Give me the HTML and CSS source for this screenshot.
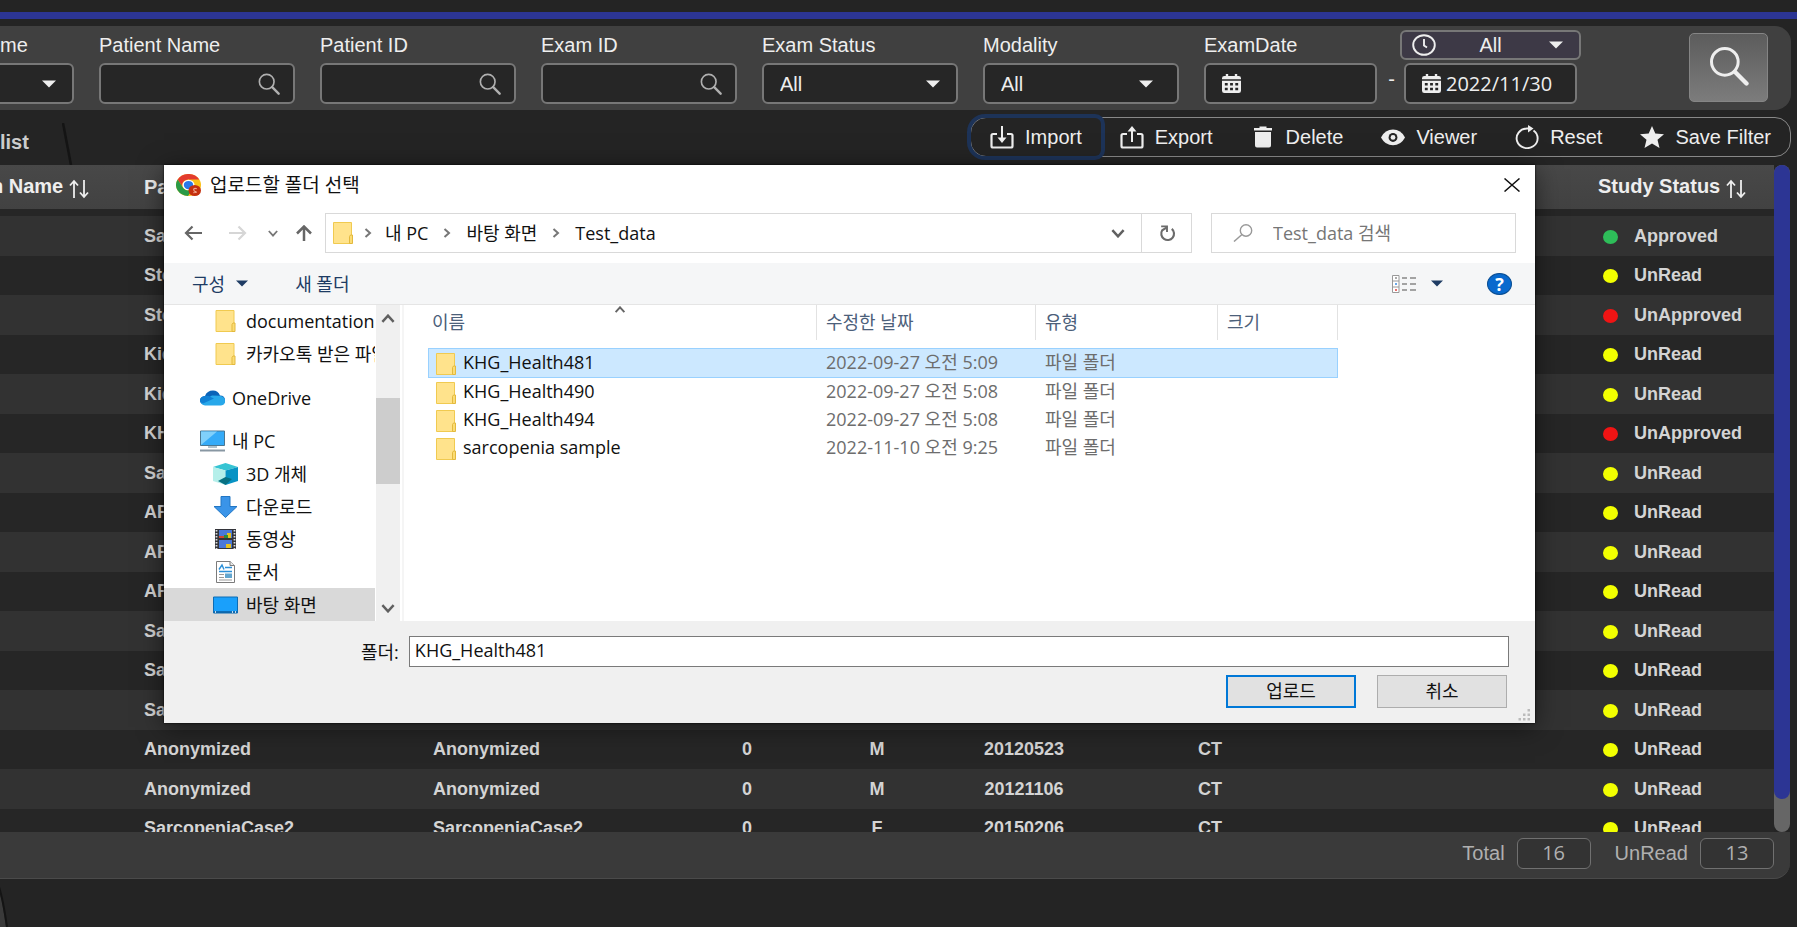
FILE: index.html
```html
<!DOCTYPE html>
<html lang="ko">
<head>
<meta charset="utf-8">
<meta name="viewport" content="width=device-width, initial-scale=1">
<title>Worklist</title>
<link rel="stylesheet" href="styles.css">
</head>
<body>
<svg class="sprite" aria-hidden="true">
  <symbol id="i-search" viewBox="0 0 24 24"><circle cx="9.5" cy="9.5" r="8" fill="none" stroke="currentColor" stroke-width="1.8"/><path d="M15.5 15.5 22.5 22.5" stroke="currentColor" stroke-width="2.6" stroke-linecap="round"/></symbol>
  <symbol id="i-drop" viewBox="0 0 14 8"><path d="M0 0.5H14L7 7.5Z" fill="currentColor"/></symbol>
  <symbol id="i-calendar" viewBox="0 0 20 20"><path d="M2.5 2H4V0H6.500V2H13.500V0H16V2H17.500Q20 2 20 4.500V5.500H0V4.500Q0 2 2.500 2ZM0 7H20V17.500Q20 20 17.500 20H2.500Q0 20 0 17.500Z" fill="currentColor"/><path d="M3 9.500h3v2.500H3zM8.500 9.500h3v2.500h-3zM14 9.500h3v2.500h-3zM3 14.500h3v2.500H3zM8.500 14.500h3v2.500h-3zM14 14.500h3v2.500h-3z" fill="#262626"/></symbol>
  <symbol id="i-clock" viewBox="0 0 24 22"><ellipse cx="12" cy="11" rx="10.800" ry="9.800" fill="none" stroke="currentColor" stroke-width="1.900"/><path d="M12 5V11.500L15 13.500" fill="none" stroke="currentColor" stroke-width="1.900"/></symbol>
  <symbol id="i-import" viewBox="0 0 24 24"><path d="M7 9H3Q1.500 9 1.500 10.500V21Q1.500 22.500 3 22.500H21Q22.500 22.500 22.500 21V10.500Q22.500 9 21 9H17" fill="none" stroke="currentColor" stroke-width="2.200"/><path d="M12 1V14" stroke="currentColor" stroke-width="2"/><path d="M7.500 12.500H16.500L12 18Z" fill="currentColor"/></symbol>
  <symbol id="i-export" viewBox="0 0 24 24"><path d="M7 9H3Q1.500 9 1.500 10.500V21Q1.500 22.500 3 22.500H21Q22.500 22.500 22.500 21V10.500Q22.500 9 21 9H17" fill="none" stroke="currentColor" stroke-width="2.200"/><path d="M12 5V17" stroke="currentColor" stroke-width="2"/><path d="M7.500 6.500H16.500L12 1Z" fill="currentColor"/></symbol>
  <symbol id="i-trash" viewBox="0 0 24 24"><path d="M3 3H8.500V1.500H15.500V3H21V5.500H3ZM4 7H20V20.500Q20 22.500 18 22.500H6Q4 22.500 4 20.500Z" fill="currentColor"/></symbol>
  <symbol id="i-eye" viewBox="0 0 26 24"><path d="M0 12.500Q4.500 4 13 4T26 12.500Q21.500 21 13 21T0 12.500Z" fill="currentColor"/><circle cx="13" cy="12.500" r="4.800" fill="#242424"/><circle cx="13" cy="12.500" r="2.600" fill="currentColor"/></symbol>
  <symbol id="i-reset" viewBox="0 0 24 24"><path d="M18.500 5.500A10.500 9.800 0 1 1 12 3.500H14" fill="none" stroke="currentColor" stroke-width="1.900"/><path d="M13 0 18.500 3.500 13 7.500Z" fill="currentColor"/></symbol>
  <symbol id="i-star" viewBox="0 0 24 24"><path d="M12 1 15.300 8.500 24 9.200 17.500 14.700 19.500 23 12 18.500 4.500 23 6.500 14.700 0 9.200 8.700 8.500Z" fill="currentColor"/></symbol>
  <symbol id="i-sort" viewBox="0 0 20 20"><path d="M5 19V3M1 6.500 5 2 9 6.500M15 1V17M11 13.500 15 18 19 13.500" fill="none" stroke="currentColor" stroke-width="1.800"/></symbol>
  <symbol id="i-folder" viewBox="0 0 20 22"><path d="M.5.5H18.500V21.500H.5Z" fill="#ffe38c" stroke="#f0ca50"/><path d="M16.500 21.500V14.500L17.500 13H19.500V21.500Z" fill="#fbdc74" stroke="#e3b93e"/></symbol>
  <symbol id="i-crumb" viewBox="0 0 8 10"><path d="M1.500 1 6 5 1.500 9" fill="none" stroke="#777" stroke-width="2"/></symbol>
  <symbol id="i-chev" viewBox="0 0 12 8"><path d="M1 1 6 6.500 11 1" fill="none" stroke="currentColor" stroke-width="2.200"/></symbol>
</svg>

<div class="topline"></div>

<form class="filters">
  <div class="field field-cut">
    <label for="f0">me</label>
    <div class="control"><select id="f0" class="box"><option></option></select><svg class="drop"><use href="#i-drop"/></svg></div>
  </div>
  <div class="field">
    <label for="f1">Patient Name</label>
    <div class="control"><input id="f1" class="box" type="text"><svg class="lens"><use href="#i-search"/></svg></div>
  </div>
  <div class="field">
    <label for="f2">Patient ID</label>
    <div class="control"><input id="f2" class="box" type="text"><svg class="lens"><use href="#i-search"/></svg></div>
  </div>
  <div class="field">
    <label for="f3">Exam ID</label>
    <div class="control"><input id="f3" class="box" type="text"><svg class="lens"><use href="#i-search"/></svg></div>
  </div>
  <div class="field">
    <label for="f4">Exam Status</label>
    <div class="control"><select id="f4" class="box"><option>All</option></select><svg class="drop"><use href="#i-drop"/></svg></div>
  </div>
  <div class="field">
    <label for="f5">Modality</label>
    <div class="control"><select id="f5" class="box"><option>All</option></select><svg class="drop drop-in"><use href="#i-drop"/></svg></div>
  </div>
  <div class="dates">
    <div class="field from">
      <label for="f6">ExamDate</label>
      <div class="control"><input id="f6" class="box date" type="text"><svg class="cal"><use href="#i-calendar"/></svg></div>
    </div>
    <span class="dash">-</span>
    <div class="to">
      <div class="control range">
        <select class="box" aria-label="Date range"><option>All</option></select>
        <svg class="clock"><use href="#i-clock"/></svg><svg class="drop"><use href="#i-drop"/></svg>
      </div>
      <div class="control until"><input class="box date" type="text" value="2022/11/30" aria-label="End date"><svg class="cal"><use href="#i-calendar"/></svg></div>
    </div>
  </div>
  <button class="go" type="button" aria-label="Search"><svg><use href="#i-search"/></svg></button>
</form>

<div class="actions">
  <h1 class="tab">list</h1>
  <svg class="tab-edge" viewBox="0 0 12 42"><path d="M1 0Q3 10 9 42" fill="none" stroke="#141414" stroke-width="2.500"/></svg>
  <div class="toolbar">
    <button type="button" class="focused"><svg><use href="#i-import"/></svg>Import</button>
    <button type="button"><svg><use href="#i-export"/></svg>Export</button>
    <button type="button"><svg><use href="#i-trash"/></svg>Delete</button>
    <button type="button"><svg><use href="#i-eye"/></svg>Viewer</button>
    <button type="button"><svg><use href="#i-reset"/></svg>Reset</button>
    <button type="button"><svg><use href="#i-star"/></svg>Save Filter</button>
  </div>
</div>

<main class="list">
  <div class="rows">
    <table class="studies">
      <colgroup><col class="c1"><col class="c2"><col class="c3"><col class="c4"><col class="c5"><col class="c6"><col class="c7"><col><col class="c9"></colgroup>
      <thead><tr><th class="cut">n Name<svg class="sort"><use href="#i-sort"/></svg></th><th>Patient</th><th></th><th></th><th></th><th></th><th></th><th></th><th>Study Status<svg class="sort"><use href="#i-sort"/></svg></th></tr></thead>
      <tbody>
        <tr><td></td><td>Sar</td><td></td><td></td><td></td><td></td><td></td><td></td><td><i class="dot green"></i>Approved</td></tr>
        <tr><td></td><td>Ste</td><td></td><td></td><td></td><td></td><td></td><td></td><td><i class="dot"></i>UnRead</td></tr>
        <tr><td></td><td>Ste</td><td></td><td></td><td></td><td></td><td></td><td></td><td><i class="dot red"></i>UnApproved</td></tr>
        <tr><td></td><td>Kid</td><td></td><td></td><td></td><td></td><td></td><td></td><td><i class="dot"></i>UnRead</td></tr>
        <tr><td></td><td>Kid</td><td></td><td></td><td></td><td></td><td></td><td></td><td><i class="dot"></i>UnRead</td></tr>
        <tr><td></td><td>KHG</td><td></td><td></td><td></td><td></td><td></td><td></td><td><i class="dot red"></i>UnApproved</td></tr>
        <tr><td></td><td>Sar</td><td></td><td></td><td></td><td></td><td></td><td></td><td><i class="dot"></i>UnRead</td></tr>
        <tr><td></td><td>AP</td><td></td><td></td><td></td><td></td><td></td><td></td><td><i class="dot"></i>UnRead</td></tr>
        <tr><td></td><td>AP</td><td></td><td></td><td></td><td></td><td></td><td></td><td><i class="dot"></i>UnRead</td></tr>
        <tr><td></td><td>AP</td><td></td><td></td><td></td><td></td><td></td><td></td><td><i class="dot"></i>UnRead</td></tr>
        <tr><td></td><td>Sar</td><td></td><td></td><td></td><td></td><td></td><td></td><td><i class="dot"></i>UnRead</td></tr>
        <tr><td></td><td>Sar</td><td></td><td></td><td></td><td></td><td></td><td></td><td><i class="dot"></i>UnRead</td></tr>
        <tr><td></td><td>Sar</td><td></td><td></td><td></td><td></td><td></td><td></td><td><i class="dot"></i>UnRead</td></tr>
        <tr><td></td><td>Anonymized</td><td>Anonymized</td><td>0</td><td>M</td><td>20120523</td><td>CT</td><td></td><td><i class="dot"></i>UnRead</td></tr>
        <tr><td></td><td>Anonymized</td><td>Anonymized</td><td>0</td><td>M</td><td>20121106</td><td>CT</td><td></td><td><i class="dot"></i>UnRead</td></tr>
        <tr><td></td><td>SarcopeniaCase2</td><td>SarcopeniaCase2</td><td>0</td><td>F</td><td>20150206</td><td>CT</td><td></td><td><i class="dot"></i>UnRead</td></tr>
      </tbody>
    </table>
    <div class="track"><div class="thumb"></div></div>
  </div>
  <footer class="totals">
    <span>Total</span><output>16</output><span>UnRead</span><output>13</output>
  </footer>
</main>
<div class="bottom"><svg viewBox="0 0 10 40"><path d="M-2 0Q2 12 6 40H-2Z" fill="#3a3a3a"/><path d="M-1 0Q3 12 7 40" fill="none" stroke="#141414" stroke-width="2"/></svg></div>

<section class="dialog" role="dialog" aria-labelledby="dlg-title">
  <header class="titlebar">
    <svg class="chrome" viewBox="0 0 24 24" preserveAspectRatio="none">
      <circle cx="12" cy="12" r="12" fill="#fbc116"/>
      <path d="M1.600 6A12 12 0 0 1 22.400 6H12A6 6 0 0 0 6.500 14.500Z" fill="#e33b2e"/>
      <path d="M1.600 6A12 12 0 0 0 11.500 24L17 15A6 6 0 0 1 6.800 15Z" fill="#2a9a47"/>
      <circle cx="12" cy="12" r="5.800" fill="#fff"/><circle cx="12" cy="12" r="4.500" fill="#2a78e8"/>
      <circle cx="18" cy="18" r="6" fill="#c5300e"/><path d="M20 16Q17 15 17 17T19 19.500 16.500 20.500" fill="none" stroke="#f0a48c" stroke-width="1.200"/>
    </svg>
    <h2 id="dlg-title">업로드할 폴더 선택</h2>
    <button type="button" class="close" aria-label="닫기"><svg viewBox="0 0 16 14" preserveAspectRatio="none"><path d="M.5.5 15.500 13.500M15.500.5.5 13.500" stroke="#111" stroke-width="1.500"/></svg></button>
  </header>

  <div class="nav">
    <div class="moves">
      <button type="button" aria-label="뒤로"><svg viewBox="0 0 18 16"><path d="M18 8H2M8.500 1.500 2 8 8.500 14.500" fill="none" stroke="#666" stroke-width="2.200"/></svg></button>
      <button type="button" aria-label="앞으로" class="fwd"><svg viewBox="0 0 18 16"><path d="M0 8H16M9.500 1.500 16 8 9.500 14.500" fill="none" stroke="#d6d6d6" stroke-width="2.200"/></svg></button>
      <button type="button" aria-label="최근 위치" class="recent"><svg class="chev-s"><use href="#i-chev"/></svg></button>
      <button type="button" aria-label="위로"><svg viewBox="0 0 18 16"><path d="M9 16V2M2 8.500 9 1.500 16 8.500" fill="none" stroke="#666" stroke-width="2.500"/></svg></button>
    </div>
    <div class="address">
      <svg class="folder"><use href="#i-folder"/></svg>
      <svg class="crumb"><use href="#i-crumb"/></svg><span>내 PC</span>
      <svg class="crumb"><use href="#i-crumb"/></svg><span>바탕 화면</span>
      <svg class="crumb"><use href="#i-crumb"/></svg><span>Test_data</span>
      <button type="button" class="history" aria-label="이전 위치"><svg class="chev"><use href="#i-chev"/></svg></button>
      <button type="button" class="refresh" aria-label="새로 고침"><svg viewBox="0 0 16 16"><path d="M12.500 3.600A6 6 0 1 1 3.500 5L7.500 2.500" fill="none" stroke="#6b6b6b" stroke-width="2"/><path d="M2.500 1.300H8V6.500" fill="none" stroke="#6b6b6b" stroke-width="1.800"/></svg></button>
    </div>
    <div class="find">
      <svg viewBox="0 0 20 18"><circle cx="13" cy="6.500" r="5.700" fill="none" stroke="#999" stroke-width="1.400"/><path d="M9 10.500 1 17.500" stroke="#999" stroke-width="1.500"/></svg>
      <input type="text" placeholder="Test_data 검색" aria-label="Test_data 검색">
    </div>
  </div>

  <div class="commands">
    <button type="button" class="organize">구성<svg class="drop"><use href="#i-drop"/></svg></button>
    <button type="button">새 폴더</button>
    <button type="button" class="view" aria-label="보기"><svg class="details" viewBox="0 0 25 18"><path d="M.5.500H7V17.500H.5ZM.5 6H7M.5 12H7" fill="#fff" stroke="#999"/><path d="M10 3h5M18 3h6M10 9h5M18 9h6M10 15h5M18 15h6" stroke="#888" stroke-width="1.300"/><path d="M3 3h2" stroke="#555"/><path d="M3 9h2" stroke="#3c8de0" stroke-width="1.500"/><path d="M3 15h2" stroke="#e03c3c" stroke-width="1.500"/></svg><svg class="drop"><use href="#i-drop"/></svg></button>
    <button type="button" class="help" aria-label="도움말">?</button>
  </div>

  <div class="panes">
    <ul class="tree">
      <li class="sub"><svg class="folder"><use href="#i-folder"/></svg>documentation</li>
      <li class="sub"><svg class="folder"><use href="#i-folder"/></svg>카카오톡 받은 파일</li>
      <li class="gap"></li>
      <li><svg viewBox="0 0 25 15"><path d="M5 14Q0 14 0 10 0 6 5 5.500 7 0 13 0 18 0 20 5 25 5 25 10 25 14 21 14Z" fill="#0a63b8"/><path d="M5 15Q1 14.500 1 11L12 5 20 5.200Q25 6 25 10.500 25 14.500 21 15Z" fill="#28a8ea"/><path d="M5 5.500 8 5.200 14 8 3 13Q0 12 0 10 0 6 5 5.500Z" fill="#1080d4"/></svg>OneDrive</li>
      <li class="gap"></li>
      <li><svg viewBox="0 0 25 21"><path d="M.5.5H24.500V15H.5Z" fill="#35abf8" stroke="#4b7791"/><path d="M1 14.500V1H17Z" fill="#80d0fb"/><path d="M8 16.500H17" stroke="#9db3c0" stroke-width="1.600"/><path d="M0 20H25" stroke="#8897a3" stroke-width="2"/></svg>내 PC</li>
      <li class="sub"><svg viewBox="0 0 25 22"><path d="M12.500 0 25 4 12.500 7.500 0 4Z" fill="#36c4d3"/><path d="M0 4 12.500 7.500V22L0 18Z" fill="#b5efea"/><path d="M25 4 12.500 7.500V22L25 18Z" fill="#0793c4"/><path d="M12.500 14 19 16 12.500 22 5 18Z" fill="#087183"/></svg>3D 개체</li>
      <li class="sub"><svg viewBox="0 0 25 22"><path d="M8 .5H17V10.500H24L12.500 21.500 1 10.500H8Z" fill="#3a94e8" stroke="#2176c4"/></svg>다운로드</li>
      <li class="sub"><svg viewBox="0 0 25 22"><path d="M2 1H23V21H2Z" fill="#33343a"/><path d="M3.500 2V21M21.500 2V21" stroke="#ddd" stroke-width="1.800" stroke-dasharray="1.500 1.500"/><path d="M6 2H19V10H6ZM6 12H19V20H6Z" fill="#4a78d8"/><path d="M6 8h5v2H6z" fill="#d04630"/><path d="M14 5h4v5h-4zM13 16h5v4h-5z" fill="#e6c11c"/><path d="M11 7h4v3h-4z" fill="#2e8a3a"/></svg>동영상</li>
      <li class="sub"><svg viewBox="0 0 25 22"><path d="M3.500.5H17L21.500 4.500V21.500H3.500Z" fill="#fff" stroke="#7b7b7b"/><path d="M17 .5V4.500H21.500" fill="#e8e8e8" stroke="#7b7b7b"/><path d="M6 8.500 9 4 11 8.500M12 6.500H19M6 10.500H19" fill="none" stroke="#2b8fd8" stroke-width="1.400"/><path d="M6 13.500H11M6 16.500H11M6 19H19" stroke="#999"/><path d="M12 12.500H19V17H12Z" fill="#63a6cf"/></svg>문서</li>
      <li class="sub current"><svg viewBox="0 0 25 17"><path d="M.5.5H24.500V16.500H.5Z" fill="#1aa0fb" stroke="#0d6cb4"/><path d="M1 15.500H24" stroke="#0b5d9e" stroke-width="1.500"/><path d="M2 15.500h1M19 15.500h1M22 15.500h1" stroke="#fff" stroke-width="1.500"/></svg>바탕 화면</li>
    </ul>
    <div class="side-scroll"><svg class="chev flip"><use href="#i-chev"/></svg><div class="side-thumb"></div><svg class="chev"><use href="#i-chev"/></svg></div>
    <div class="files">
      <table>
        <colgroup><col class="f-name"><col class="f-date"><col class="f-type"><col class="f-size"></colgroup>
        <thead><tr><th>이름<svg class="asc"><use href="#i-chev"/></svg></th><th>수정한 날짜</th><th>유형</th><th>크기</th></tr></thead>
        <tbody>
          <tr class="selected"><td><svg class="folder"><use href="#i-folder"/></svg>KHG_Health481</td><td>2022-09-27 오전 5:09</td><td>파일 폴더</td><td></td></tr>
          <tr><td><svg class="folder"><use href="#i-folder"/></svg>KHG_Health490</td><td>2022-09-27 오전 5:08</td><td>파일 폴더</td><td></td></tr>
          <tr><td><svg class="folder"><use href="#i-folder"/></svg>KHG_Health494</td><td>2022-09-27 오전 5:08</td><td>파일 폴더</td><td></td></tr>
          <tr><td><svg class="folder"><use href="#i-folder"/></svg>sarcopenia sample</td><td>2022-11-10 오전 9:25</td><td>파일 폴더</td><td></td></tr>
        </tbody>
      </table>
    </div>
  </div>

  <div class="confirm">
    <div class="name"><label for="folder">폴더:</label><input id="folder" type="text" value="KHG_Health481"></div>
    <div class="buttons"><button type="button" class="primary">업로드</button><button type="button">취소</button></div>
    <svg class="grip" viewBox="0 0 12 12"><path d="M9 0h2.500v2.500H9zM9 4.500h2.500V7H9zM9 9h2.500v2.500H9zM4.500 4.500H7V7H4.500zM4.500 9H7v2.500H4.500zM0 9h2.500v2.500H0z" fill="#bbb"/></svg>
  </div>
</section>
</body>
</html>
```

FILE: styles.css
```css
* { box-sizing: border-box; }

body {
  margin: 0;
  height: 100vh;
  display: flex;
  flex-direction: column;
  overflow: hidden;
  background: #242424;
  color: #eee;
  font-family: "Liberation Sans", Arial, "Noto Sans CJK KR", sans-serif;
  font-size: 20px;
}

button, input, select { font: inherit; color: inherit; }
button { padding: 0; border: 0; background: none; }
svg { flex: none; }
.sprite { position: absolute; width: 0; height: 0; }

.topline { flex: none; height: 7px; margin-top: 12px; background: #2c3594; }

/* Filter panel */
.filters {
  flex: none;
  display: flex;
  align-items: flex-end;
  gap: 25px;
  height: 84px;
  margin: 7px 6px 0 0;
  padding-bottom: 6px;
  background: #404040;
  border-radius: 0 16px 16px 0;
}
.field { flex: 0 1 196px; min-width: 0; display: flex; flex-direction: column; gap: 6px; }
.field label { line-height: 24px; white-space: nowrap; }
.field-cut { flex: none; width: 74px; }
.field-cut .box { border-left: 0; border-radius: 0 6px 6px 0; }
.control { display: grid; align-items: center; }
.control > * { grid-area: 1 / 1; }
.control svg { pointer-events: none; }
.box {
  width: 100%;
  min-width: 0;
  height: 41px;
  padding: 0 16px;
  background: #262626;
  border: 2px solid #777;
  border-radius: 6px;
  appearance: none;
}
.drop { width: 14px; height: 8px; }
.control .drop { justify-self: end; margin-right: 18px; }
.control .drop-in { margin-right: 26px; }
.lens { width: 24px; height: 22px; justify-self: end; margin-right: 14px; color: #b0b0b0; }
.dates { flex: none; display: flex; align-items: flex-end; }
.dates .from { flex: none; width: 173px; }
.dates .dash { width: 23px; padding-left: 6px; line-height: 50px; text-align: center; }
.to { width: 181px; display: flex; flex-direction: column; gap: 3px; }
.to .until { margin: 0 4px; }
.range .box { height: 30px; padding: 0; background: #3d3946; text-align: center; text-align-last: center; }
.clock { width: 24px; height: 22px; margin-left: 12px; }
.date { padding-left: 40px; font-family: "Open Sans", "Noto Sans", sans-serif; }
.cal { width: 19px; height: 19px; margin-left: 18px; }
.go {
  flex: none;
  width: 79px;
  height: 69px;
  margin: 0 23px 2px auto;
  background: linear-gradient(#5c5c5c, #7c7c7c);
  border: 1px solid #858585;
  border-radius: 5px;
}
.go svg { display: block; width: 44px; height: 40px; margin: 0 auto 4px; }

/* Tab and toolbar */
.actions { flex: none; display: flex; height: 55px; padding: 7px 6px 0 0; }
.tab { width: 62px; margin: 0; font-size: 20px; line-height: 50px; color: #ccc; }
.tab-edge { width: 12px; height: 42px; margin-top: 6px; }
.toolbar { display: flex; height: 40px; margin-left: auto; border: 1px solid #888; border-radius: 16px; }
.toolbar button { display: flex; align-items: center; gap: 11px; padding: 0 19px; border-radius: 14px 6px 6px 14px; white-space: nowrap; }
.toolbar svg { width: 24px; height: 24px; }
.toolbar .focused { box-shadow: 0 0 0 4px #1d3358; }

/* Study list */
.list { flex: 1; min-height: 0; display: flex; flex-direction: column; margin-right: 7px; }
.rows { flex: 1; min-height: 0; display: flex; align-items: stretch; overflow: hidden; }
.studies { flex: 1; align-self: flex-start; table-layout: fixed; width: 100%; border-collapse: separate; border-spacing: 0; font-size: 18px; font-weight: bold; color: #d4d4d4; }
.studies th, .studies td { padding: 0; text-align: left; white-space: nowrap; }
.studies th { height: 51px; background: linear-gradient(#484848, #424242); background-clip: padding-box; border-bottom: 7px solid #262626; font-size: 20px; color: #eee; }
.studies tr { height: 40px; background: #262626; }
.studies tr:nth-child(even) { height: 39px; }
.studies tbody tr:nth-child(odd) { background: #323232; }
.studies td:nth-child(n+4):nth-child(-n+7) { text-align: center; }
.cut { text-indent: -9px; }
.sort { width: 20px; height: 20px; margin-left: 6px; vertical-align: -6px; }
.c1 { width: 144px; } .c2 { width: 289px; } .c3 { width: 249px; }
.c4, .c5 { width: 130px; } .c6 { width: 164px; } .c7 { width: 208px; } .c9 { width: 176px; }
.dot { display: inline-block; width: 15px; height: 14px; margin: 0 16px 0 5px; border-radius: 50%; background: #f2ff00; vertical-align: -2px; }
.dot.green { background: #2ebd59; }
.dot.red { background: #f01414; }
.track { flex: none; width: 16px; background: #666; border-radius: 8px; }
.thumb { height: 95%; background: #2c3594; border-radius: 8px; }
.totals { flex: none; height: 47px; display: flex; align-items: center; justify-content: flex-end; gap: 12px; padding: 0 16px 4px 0; background: #3a3a3a; border-bottom: 1px solid #4a4a4a; border-radius: 0 0 16px 0; color: #b0b0b0; }
.totals output { width: 74px; height: 31px; border: 1px solid #707070; border-radius: 6px; background: #333; text-align: center; line-height: 28px; font-family: "Open Sans", "Noto Sans", sans-serif; }
.totals output + span { margin-left: 12px; }
.bottom { flex: none; height: 48px; display: flex; align-items: flex-end; }
.bottom svg { width: 10px; height: 40px; }

/* Folder picker window */
.dialog {
  position: absolute;
  top: 165px;
  left: 164px;
  right: 262px;
  height: 558px;
  display: flex;
  flex-direction: column;
  background: #fff;
  color: #111;
  box-shadow: 0 0 2px #000, 0 4px 24px rgba(0, 0, 0, .5);
  font-family: "Open Sans", "Noto Sans CJK KR", sans-serif;
  font-size: 18px;
}
.titlebar { display: flex; align-items: center; height: 40px; padding: 0 15px 0 12px; }
.chrome { width: 25px; height: 22px; }
.titlebar h2 { margin: 0 auto 0 9px; font-size: 19px; font-weight: normal; line-height: 30px; }
.close svg { display: block; width: 16px; height: 14px; }

.nav { display: flex; align-items: center; height: 58px; padding: 8px 19px 10px 20px; }
.moves { flex: none; display: flex; align-items: center; width: 141px; color: #777; }
.moves svg { display: block; width: 18px; height: 16px; }
.moves .fwd { margin-left: 27px; }
.moves .recent { margin: 0 17px 0 21px; }
.moves .chev-s { width: 10px; height: 7px; }
.address { flex: 1; display: flex; align-items: center; height: 40px; padding-left: 7px; border: 1px solid #d9d9d9; }
.address span { line-height: 24px; }
.folder { width: 20px; height: 22px; }
.crumb { width: 8px; height: 10px; margin: 0 15px; }
.folder + .crumb { margin: 0 13px 0 11px; }
.history { margin: 0 16px 0 auto; color: #666; }
.chev { display: block; width: 14px; height: 9px; color: #606060; }
.refresh { align-self: stretch; width: 50px; border-left: 1px solid #d9d9d9; }
.refresh svg { display: block; width: 18px; height: 17px; margin: 0 auto; }
.find { display: flex; align-items: center; width: 305px; height: 40px; margin-left: 19px; padding-left: 21px; border: 1px solid #d9d9d9; }
.find svg { width: 20px; height: 18px; }
.find input { flex: 1; min-width: 0; margin-left: 20px; padding: 0; border: 0; background: none; }
.find input::placeholder { color: #767676; }

.commands { display: flex; align-items: center; height: 42px; padding: 0 23px 0 28px; background: #f5f6f7; border-bottom: 1px solid #e5e5e5; color: #1e3c64; }
.commands button { line-height: 24px; }
.organize { display: flex; align-items: center; gap: 11px; margin-right: 47px; }
.commands .drop { width: 12px; height: 7px; }
.view { display: flex; align-items: center; gap: 14px; margin-left: auto; }
.details { width: 25px; height: 18px; }
.commands .help { width: 25px; height: 22px; margin-left: 44px; border: 1px solid #0a4d91; border-radius: 50%; background: #0869ce; color: #fff; font-weight: bold; line-height: 20px; }

.panes { flex: 1; min-height: 0; display: flex; }
.tree { flex: none; width: 211px; margin: 0; padding: 0; list-style: none; display: flex; flex-direction: column; overflow: hidden; }
.tree li { flex: 1; display: flex; align-items: center; gap: 7px; padding-left: 36px; white-space: nowrap; line-height: 24px; overflow: hidden; }
.tree .sub { gap: 8px; padding-left: 49px; }
.tree .gap { flex: none; height: 11px; }
.tree svg { width: 25px; height: 22px; }
.tree .current { background: #d9d9d9; }
.side-scroll { flex: none; width: 24px; margin-left: 1px; padding: 9px 0 8px; display: flex; flex-direction: column; align-items: center; justify-content: space-between; background: #f0f0f0; }
.flip { transform: scaleY(-1); }
.side-thumb { width: 100%; height: 86px; margin-bottom: 45px; background: #cdcdcd; }
.files { flex: 1; min-width: 0; margin-left: 2px; padding-left: 24px; border-left: 2px solid #f5f5f5; overflow: hidden; }
.files table { table-layout: fixed; width: 910px; border-collapse: separate; border-spacing: 0; }
.f-name { width: 389px; } .f-date { width: 219px; } .f-type { width: 182px; } .f-size { width: 120px; }
.files th { position: relative; height: 35px; padding: 0 0 2px 9px; border-right: 1px solid #e2e2e2; color: #4c607a; font-weight: normal; text-align: left; line-height: 24px; }
.files th:first-child { padding-left: 4px; }
.asc { position: absolute; top: 1px; left: 48%; width: 12px; height: 7px; color: #666; transform: scaleY(-1); }
.files tbody::before { content: ""; display: block; height: 8px; }
.files td { height: 28px; padding: 0 0 2px 9px; color: #6d6d6d; line-height: 24px; white-space: nowrap; }
.files .selected td { height: 30px; }
.files td:first-child { padding-left: 8px; color: #111; }
.files .selected td:first-child { padding-left: 7px; }
.files td .folder { margin-right: 7px; vertical-align: -6px; }
.selected td { background: #cce8ff; border: solid #99d1ff; border-width: 1px 0; }
.selected td:first-child { border-left-width: 1px; }
.selected td:last-child { border-right-width: 1px; }

.confirm { position: relative; flex: none; height: 102px; padding: 15px 26px 0 197px; background: #f0f0f0; }
.name { display: flex; align-items: center; gap: 10px; }
.name label { flex: none; line-height: 24px; }
.name input { flex: 1; min-width: 0; height: 31px; padding: 0 5px 3px; border: 1px solid #7a7a7a; background: #fff; }
.buttons { display: flex; justify-content: flex-end; gap: 21px; padding: 8px 2px 0 0; }
.buttons button { width: 130px; height: 33px; padding-bottom: 3px; border: 1px solid #adadad; background: #e1e1e1; }
.buttons .primary { border: 2px solid #0078d7; }
.grip { position: absolute; right: 4px; bottom: 2px; width: 13px; height: 12px; }
```
